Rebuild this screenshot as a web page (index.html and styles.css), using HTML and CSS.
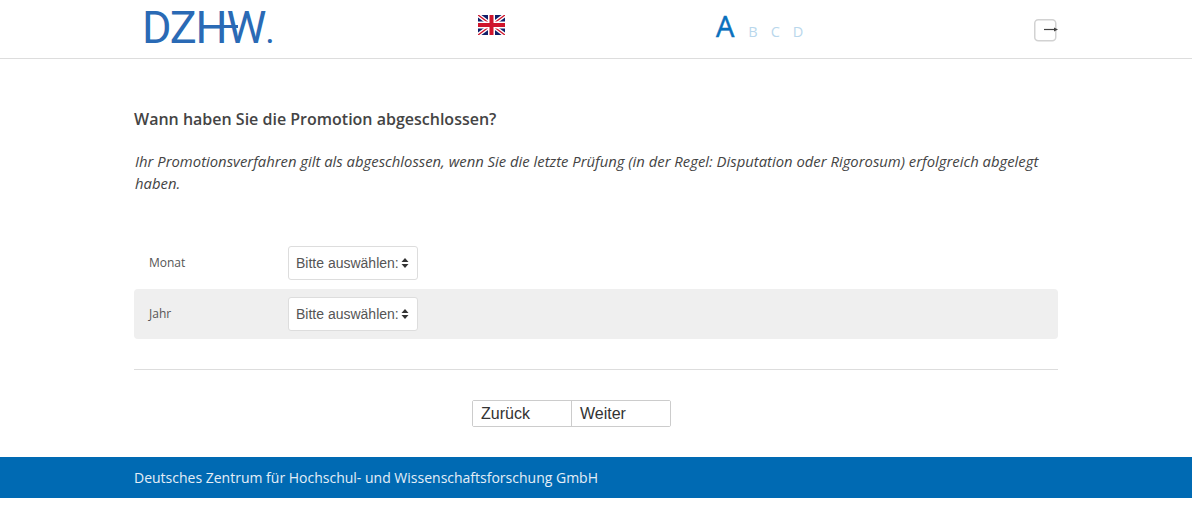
FILE: index.html
```html
<!DOCTYPE html>
<html lang="de">
<head>
<meta charset="utf-8">
<title>DZHW</title>
<link rel="stylesheet" href="styles.css">
</head>
<body>
<header class="top">
  <div class="top-inner">
    <div class="logo"><span class="logo-bar"></span><span class="logo-text">DZHW<span class="logo-dot">.</span></span></div>
    <svg class="flag" width="27" height="20" viewBox="0 0 27 20">
      <rect width="27" height="20" fill="#10206a"/>
      <path d="M0 0L27 20M27 0L0 20" stroke="#fff" stroke-width="4"/>
      <path d="M0 0L27 20M27 0L0 20" stroke="#cf142b" stroke-width="1.4"/>
      <path d="M13.5 0V20M0 10H27" stroke="#fff" stroke-width="7"/>
      <path d="M13.5 0V20M0 10H27" stroke="#cf142b" stroke-width="4"/>
    </svg>
    <div class="steps"><span class="step-active">A</span><span class="step">B</span><span class="step">C</span><span class="step">D</span></div>
    <svg class="exit" width="24" height="23" viewBox="0 0 24 23">
      <rect x="0.75" y="0.75" width="21" height="21" rx="3.5" fill="#fff" stroke="#d2d2d2" stroke-width="1.5"/>
      <path d="M10 10.5H21" stroke="#444" stroke-width="1.2"/>
      <path d="M20 8.5L24 10.5L20 12.5Z" fill="#444"/>
    </svg>
  </div>
</header>
<main class="content">
  <h1 class="question">Wann haben Sie die Promotion abgeschlossen?</h1>
  <p class="hint">Ihr Promotionsverfahren gilt als abgeschlossen, wenn Sie die letzte Prüfung (in der Regel: Disputation oder Rigorosum) erfolgreich abgelegt haben.</p>
  <div class="rows">
    <div class="row">
      <span class="label">Monat</span>
      <div class="select"><span>Bitte auswählen:</span><svg class="carets" width="8" height="10" viewBox="0 0 8 10"><path d="M4 0L7.5 4H.5ZM4 10L.5 6H7.5Z" fill="#333"/></svg></div>
    </div>
    <div class="row row-alt">
      <span class="label">Jahr</span>
      <div class="select"><span>Bitte auswählen:</span><svg class="carets" width="8" height="10" viewBox="0 0 8 10"><path d="M4 0L7.5 4H.5ZM4 10L.5 6H7.5Z" fill="#333"/></svg></div>
    </div>
  </div>
  <hr class="rule">
  <div class="nav">
    <div class="nav-group"><button class="nav-btn nav-first" type="button">Zurück</button><button class="nav-btn nav-second" type="button">Weiter</button></div>
  </div>
</main>
<footer class="foot">
  <div class="foot-inner">Deutsches Zentrum für Hochschul- und Wissenschaftsforschung GmbH</div>
</footer>
</body>
</html>
```
FILE: styles.css
```css
* { box-sizing: border-box; }
html, body { margin: 0; padding: 0; background: #fff; overflow: hidden; }
body { font-family: "Open Sans", sans-serif; color: #444; height: 507px; }

.top { height: 59px; border-bottom: 1px solid #ddd; }
.top-inner { width: 924px; margin: 0 auto; height: 58px; display: flex; align-items: flex-start; }

.logo { position: relative; width: 344px; padding: 0 0 0 8px; flex: none; }
.logo-text { position: relative; display: block; margin-top: 2px; font-family: Roboto, sans-serif; font-weight: 400; font-size: 45px; line-height: 52px; letter-spacing: -1.2px; white-space: nowrap; color: #2a6ab5; }
.logo-dot { font-size: 36px; letter-spacing: 0; }
.logo-bar { position: absolute; left: 72px; top: 25px; width: 32px; height: 3px; background: #2a6ab5; }

.flag { flex: none; margin-top: 15px; }
.steps { flex: none; margin-left: 211px; width: 318px; display: flex; align-items: baseline; height: 58px; padding-top: 6px; color: #b9d7ec; }
.step-active { font-size: 29px; line-height: 40px; font-weight: 400; -webkit-text-stroke: 0.5px #0a70bd; color: #0a70bd; margin-right: 14px; }
.step { font-size: 14.5px; margin-right: 13px; }
.exit { flex: none; margin-top: 19px; }

.content { width: 924px; margin: 0 auto; }
.question { margin: 0; padding-top: 49px; font-size: 16px; line-height: 22px; font-weight: 600; color: #444; }
.hint { margin: 20px 0 0; padding-left: 1px; font-size: 14.83px; line-height: 22px; font-style: italic; color: #444; }

.rows { margin-top: 44px; }
.row { display: flex; align-items: center; height: 50px; padding-left: 15px; border-radius: 4px; }
.row-alt { margin-top: 1px; background: #efefef; }
.label { width: 139px; padding-bottom: 2px; font-size: 12px; color: #555; }
.select { width: 130px; height: 34px; padding: 0 8px 0 7px; display: flex; align-items: center; justify-content: space-between; background: #fff; border: 1px solid #ddd; border-radius: 3px; font-family: "Liberation Sans", Arial, sans-serif; font-size: 14px; color: #555; }
.carets { flex: none; }

.rule { border: 0; border-top: 1px solid #ddd; margin: 30px 0 0; }
.nav { display: flex; justify-content: center; padding: 30px 49px 0 0; }
.nav-group { display: flex; width: 199px; height: 27px; border: 1px solid #ccc; border-radius: 2px; }
.nav-btn { flex: none; height: 25px; padding: 0 8px; background: #fff; border: 0; text-align: left; font-family: "Liberation Sans", Arial, sans-serif; font-size: 16px; color: #333; }
.nav-first { width: 98px; }
.nav-second { width: 99px; border-left: 1px solid #ccc; }

.foot { margin-top: 30px; height: 41px; background: #006ab3; }
.foot-inner { width: 924px; margin: 0 auto; font-size: 14px; line-height: 41px; color: #e4eef7; }
```
